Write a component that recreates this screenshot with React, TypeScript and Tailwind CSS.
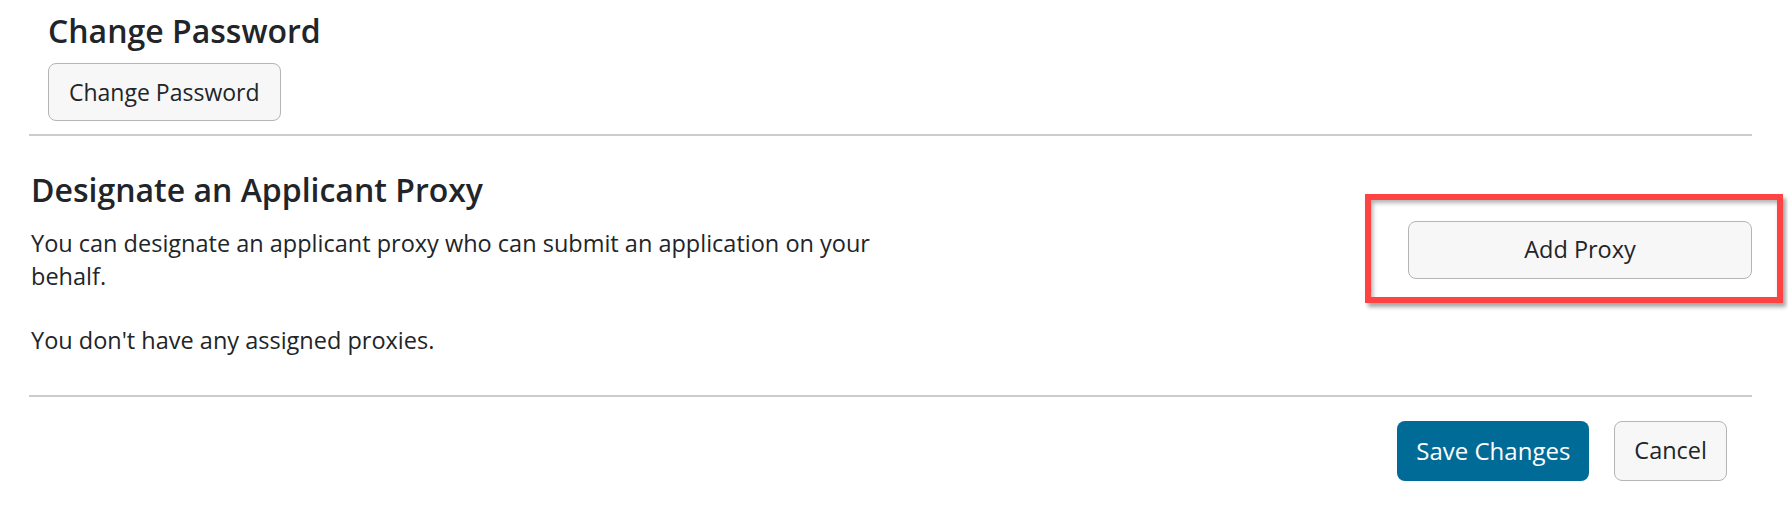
const font = { fontFamily: '"Open Sans", "Noto Sans", sans-serif' };

export default function App() {
  return (
    <div className="min-h-[507px] bg-white text-[#212529]" style={font}>
      <div className="pl-[29px] pr-[36px]">
        {/* change password */}
        <section className="pl-[19px] pt-[12px] pb-[13px]">
          <h4 className="text-[32px] font-semibold leading-[38px]">Change Password</h4>
          <button className="mt-[13px] h-[58px] px-[20px] rounded-lg border border-[#b5b5b5] bg-[#f7f7f7] text-[23px] leading-none">
            Change Password
          </button>
        </section>
        <hr className="border-0 border-t-2 border-[#cccccc]" />

        {/* proxy */}
        <section className="flex justify-between pl-[2px] pt-[35px] pb-[38px]">
          <div className="w-[860px]">
            <h4 className="text-[32px] font-semibold leading-[38px]">Designate an Applicant Proxy</h4>
            <p className="mt-[18px] text-[23.5px] leading-[33px]">
              You can designate an applicant proxy who can submit an application on your behalf.
            </p>
            <p className="mt-[31px] text-[23.5px] leading-[33px]">You don't have any assigned proxies.</p>
          </div>
          <div className="relative mt-[50px] self-start">
            <button className="w-[344px] h-[58px] rounded-lg border border-[#b5b5b5] bg-[#f7f7f7] text-[23.5px] leading-none">
              Add Proxy
            </button>
            <div className="absolute -left-[43px] -right-[31px] -top-[27px] -bottom-[24px] border-[6px] border-[#ff4343] shadow-[3px_4px_4px_rgba(0,0,0,0.35),inset_2px_3px_4px_rgba(0,0,0,0.3)] pointer-events-none" />
          </div>
        </section>
        <hr className="border-0 border-t-2 border-[#cccccc]" />

        {/* actions */}
        <div className="flex justify-end gap-[25px] pr-[25px] pt-[24px]">
          <button className="h-[60px] px-[19px] rounded-lg bg-[#016b97] text-white text-[24px] leading-none">
            Save Changes
          </button>
          <button className="h-[60px] px-[19px] rounded-lg border border-[#b5b5b5] bg-[#f7f7f7] text-[23.5px] leading-none">
            Cancel
          </button>
        </div>
      </div>
    </div>
  );
}
